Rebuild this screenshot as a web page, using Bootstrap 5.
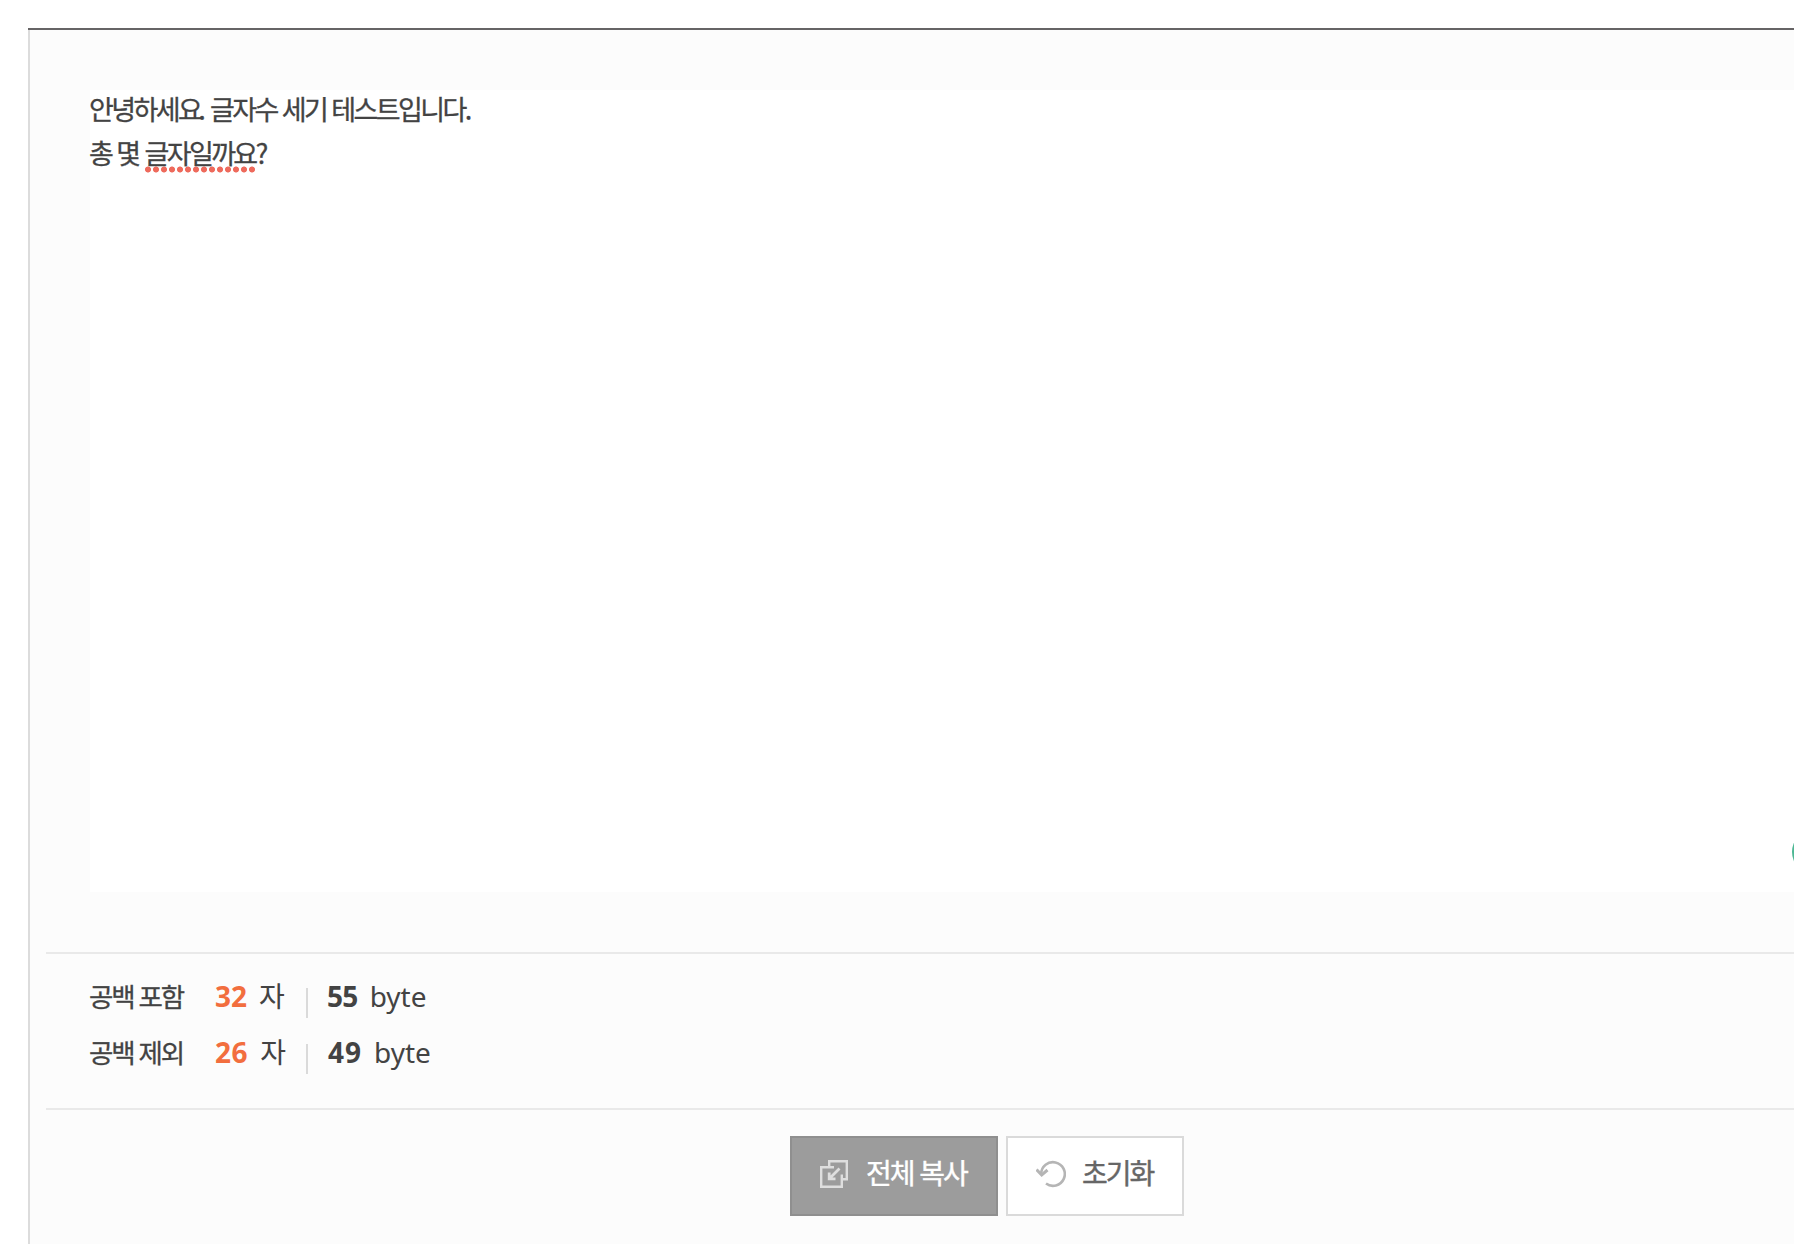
<!DOCTYPE html>
<html lang="ko">
<head>
    <meta charset="utf-8">
    <title>글자수 세기</title>
    <link href="https://cdn.jsdelivr.net/npm/bootstrap@5.3.3/dist/css/bootstrap.min.css" rel="stylesheet">
    <script src="https://cdn.jsdelivr.net/npm/bootstrap@5.3.3/dist/js/bootstrap.bundle.min.js"></script>
    <style>
        body {
            height: 1244px;
            padding: 28px 0 0 28px;
            background: #fff;
            color: #434343;
            font-family: "Noto Sans", "Noto Sans CJK KR", sans-serif;
        }
        .counter {
            width: 1918px;
            height: 1216px;
            background: #fcfcfc;
            border-top: 2px solid #666465;
            box-shadow: inset 2px 0 #dcdcdc;
            padding: 60px 18px 0;
        }
        .editor {
            height: 802px;
            margin: 0 44px 60px;
            background: #fff;
            font-family: "Noto Sans CJK KR", sans-serif;
            font-size: 27px;
            line-height: 44px;
            letter-spacing: -2.6px;
            -webkit-text-stroke: .3px;
        }
        .editor-line {
            margin-left: -1px;
        }
        .editor-line:first-child {
            margin-top: -3px;
        }
        .editor-stop {
            margin-left: -2px;
            margin-right: 2px;
        }
        .misspelled {
            display: inline-block;
            height: 44px;
            margin-left: 1px;
            background: radial-gradient(circle, #ee6a5c 2.6px, rgba(238, 106, 92, 0) 3.4px) 0 35px / 8px 7px repeat-x;
        }
        .stats {
            height: 158px;
            border-top: 2px solid #e9e9e9;
            border-bottom: 2px solid #e9e9e9;
            padding: 14px 44px 0;
        }
        .stat-row {
            height: 56px;
            line-height: 56px;
            font-size: 28px;
        }
        .stat-name {
            width: 126px;
            margin-left: -1px;
            font-family: "Noto Sans CJK KR", sans-serif;
            font-size: 26.5px;
            letter-spacing: -2.2px;
            -webkit-text-stroke: .3px;
        }
        .stat-num {
            font-weight: 700;
            margin-right: 12px;
        }
        .stat-chars {
            width: 91px;
        }
        .stat-chars .stat-num {
            color: #f26e3e;
        }
        .stat-bytes {
            height: 30px;
            line-height: 16px;
            margin-top: 20px;
            border-left: 2px solid #dadada;
            padding-left: 19px;
        }
        .stat-bytes .stat-num {
            letter-spacing: -.7px;
        }
        .stat-row:last-child .stat-num {
            letter-spacing: .6px;
        }
        .stat-row:last-child .stat-bytes {
            padding-left: 20px;
        }
        .stat-row:last-child .stat-bytes .stat-num {
            letter-spacing: 1px;
        }
        .actions {
            padding-top: 26px;
            gap: 8px;
        }
        .action-btn {
            height: 80px;
            border: 2px solid #dadada;
            border-radius: 0;
            background: #fff;
            color: #666;
            padding: 0 0 4px 28px;
            font-family: "Noto Sans CJK KR", sans-serif;
            font-size: 28px;
            line-height: 40px;
            letter-spacing: -2px;
            -webkit-text-stroke: .4px;
        }
        .action-btn svg {
            margin-right: 18px;
        }
        .action-label {
            padding-bottom: 4px;
        }
        .action-copy {
            width: 208px;
            background: #9c9c9c;
            border-color: #8f8f8f;
            color: #fff;
        }
        .action-reset {
            width: 178px;
        }
        .action-reset svg {
            margin-right: 16px;
        }
        .helper-dot {
            left: 1792px;
            top: 830px;
            width: 44px;
            height: 44px;
            background: #4db894;
        }
    </style>
</head>
<body class="overflow-hidden position-relative">
    <main class="counter">
        <!-- Text input -->
        <div class="editor d-flex flex-column">
            <div class="editor-line">안녕하세요<span class="editor-stop">.</span> 글자수 세기 테스트입니다.</div>
            <div class="editor-line">총 몇 <span class="misspelled">글자일까요</span>?</div>
        </div>

        <!-- Counts with and without spaces -->
        <section class="stats">
            <div class="stat-row d-flex">
                <span class="stat-name">공백 포함</span>
                <span class="stat-chars"><span class="stat-num">32</span>자</span>
                <span class="stat-bytes"><span class="stat-num">55</span>byte</span>
            </div>
            <div class="stat-row d-flex">
                <span class="stat-name">공백 제외</span>
                <span class="stat-chars"><span class="stat-num">26</span>자</span>
                <span class="stat-bytes"><span class="stat-num">49</span>byte</span>
            </div>
        </section>

        <!-- Buttons -->
        <div class="actions d-flex justify-content-center">
            <button type="button" class="btn action-btn action-copy d-flex align-items-center">
                <svg width="28" height="28" viewBox="0 0 28 28" fill="none" stroke="#dedede" stroke-width="2.4">
                    <path d="M14 7.2H1.2v19.6h20.6V14.5M9.2 7V1.2h17.6v18h-5"/>
                    <path d="M19.5 8.5L10 18M9.2 12.5v6.3h6.3" stroke-width="2.8"/>
                </svg>
                <span class="action-label">전체 복사</span>
            </button>
            <button type="button" class="btn action-btn action-reset d-flex align-items-center">
                <svg width="30" height="28" viewBox="0 0 30 28" fill="none" stroke="#b5b5b5" stroke-width="2.6">
                    <path d="M5.2 14A11.8 11.8 0 1 1 10 23.5"/>
                    <path d="M0.5 9.5l5.2 5.5 5.8-5" stroke-width="3"/>
                </svg>
                <span class="action-label">초기화</span>
            </button>
        </div>
    </main>
    <span class="helper-dot position-absolute rounded-circle"></span>
</body>
</html>
